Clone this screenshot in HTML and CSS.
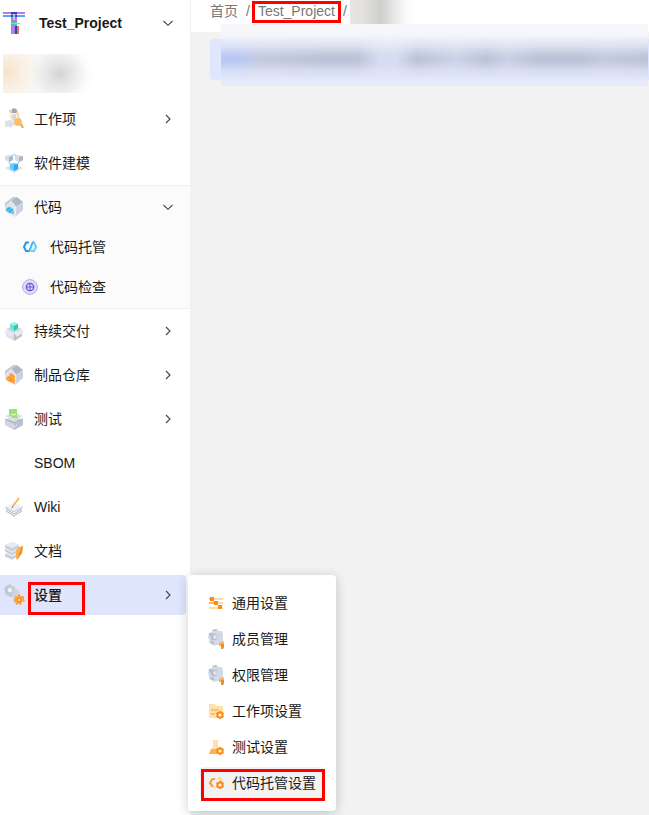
FILE: index.html
```html
<!DOCTYPE html>
<html lang="zh-CN">

<head>
    <meta charset="UTF-8">
    <meta name="viewport" content="width=device-width, initial-scale=1.0">
    <title>Test_Project</title>
    <link rel="stylesheet" href="styles.css">
</head>

<body>
    <svg class="sprite" aria-hidden="true">
        <symbol id="chevron-right" viewBox="0 0 16 16">
            <path d="M6 4l4 4-4 4" fill="none" stroke="#444" stroke-width="1.1" />
        </symbol>
        <symbol id="chevron-down" viewBox="0 0 16 16">
            <path d="M3.500 6L8 10.300 12.500 6" fill="none" stroke="#444" stroke-width="1.1" />
        </symbol>
        <!-- open house, the contents are drawn over it -->
        <symbol id="house" viewBox="0 0 20 20">
            <path d="M1 6l6-3 5 7-1 10-10-6z" fill="#dfe5ed" />
            <path d="M1 6l8-6 4 0-6 4-4 3-2 3z" fill="#c3cad6" />
            <path d="M7 4l6-4 6 5-7 5z" fill="#b0b8c6" />
            <path d="M12 10l7-5v8l-8 7z" fill="#ccd2dc" />
            <path d="M7 4l5 6-1 10" fill="none" stroke="#eceff4" />
        </symbol>
        <!-- grey gear with a pencil, shared by members and permissions -->
        <symbol id="gear-pen" viewBox="0 0 16 20">
            <path d="M4 1l4-1 2 2 4 0 1 4 0 3 0 4-3 3-3 0-3 1-3-2-2-1 0-3-1-3 1-4 3-1z" fill="#d3d9e5" />
            <path d="M5 1l3-1 2 1-4 1zM1 4l3 0-1 3-2-1zM2 13l3-1 1 3-2 0z" fill="#b2bccd" />
            <circle cx="6" cy="8" r="3.300" fill="#b3bdcc" />
            <circle cx="7" cy="8" r="2" fill="#dfe5ee" />
            <path d="M11 14l5-2v4l-1 4-2 0 0-3-2 0z" fill="#ffb354" />
            <path d="M13 15h3v3l-1 2h-2z" fill="#e98c2e" />
        </symbol>
        <symbol id="small-gear" viewBox="0 0 8 8">
            <path d="M3 0h2l.5 1.200L7 1l1 2-.8 1L8 5 7 7l-1.500-.2L5 8H3l-.5-1.200L1 7 0 5l.8-1L0 3l1-2 1.500.2z" fill="#ff8a16" />
            <circle cx="4" cy="4" r="1.600" fill="#fff3e2" />
        </symbol>
    </svg>

    <aside class="sidebar">
        <button class="project" type="button">
            <svg class="logo" viewBox="0 0 22 22" aria-hidden="true">
                <path d="M8 0h6v22H8z" fill="#b17cf8" />
                <path d="M0 0h22v2H0z" fill="#b17cf8" />
                <path d="M0 3h22v2H0z" fill="#62a0f8" />
                <path d="M8 0h6v2H8zM8 3h6v2H8z" fill="#4b39b5" />
                <path d="M10 2h2v6h-2z" fill="#8ee0c0" />
                <path d="M8 9h6v5H8z" fill="#55bfa0" />
                <path d="M8 11h9v1H8z" fill="#f3b55c" />
                <path d="M12 14h2v8h-2z" fill="#394497" />
                <path d="M14 14h2v8h-2z" fill="#f06d66" />
            </svg>
            <span>Test_Project</span>
            <svg class="chevron"><use href="#chevron-down" /></svg>
        </button>

        <div class="mask mask-project"></div>

        <nav>
            <ul class="menu">
                <li>
                    <button class="item" type="button">
                        <svg class="icon" viewBox="0 0 20 20" aria-hidden="true">
                            <path d="M5 1l8-1 4 13-9 3z" fill="#ffc98a" />
                            <path d="M6 4l6-1 4 10-8 3z" fill="#eef0f6" />
                            <path d="M8 0l3-1 2 3-1 2-4 0z" fill="#9da6b5" />
                            <path d="M8 7l4-1M8 9l4-1M9 11l3-1" stroke="#bac3d0" fill="none" />
                            <path d="M1 12l6-1 4 5-3 1-1 2-2-1-4 0z" fill="#dce0e9" />
                            <circle cx="14" cy="13" r="4" fill="#ffbd68" />
                            <path d="M17 15l2 4" stroke="#f2a13f" stroke-width="2" />
                        </svg>
                        <span>工作项</span>
                        <svg class="chevron"><use href="#chevron-right" /></svg>
                    </button>
                </li>
                <li>
                    <a class="item" href="#">
                        <svg class="icon" viewBox="0 0 20 20" aria-hidden="true">
                            <path d="M1 15l9-4 9 4-9 5z" fill="#dce1f0" />
                            <path d="M7 3q3-3 6 0M5 8q0 4 3 4M15 8q0 4-3 4" fill="none" stroke="#83ccef" />
                            <path d="M1 3l4-1 4 1v4L5 9 1 7z" fill="#d8dce5" />
                            <path d="M5 4l4-1v4l-4 2z" fill="#aeb7c6" />
                            <path d="M11 3l4-1 4 1v4l-4 2-4-2z" fill="#d8dce5" />
                            <path d="M15 4l4-1v4l-4 2z" fill="#aeb7c6" />
                            <path d="M6 11l4-1 4 1v5l-4 2-4-2z" fill="#64ccfa" />
                            <path d="M10 12l4-1v5l-4 2z" fill="#2aa9ef" />
                        </svg>
                        <span>软件建模</span>
                    </a>
                </li>
                <li class="group">
                    <button class="item" type="button">
                        <svg class="icon" viewBox="0 0 20 20" aria-hidden="true">
                            <use href="#house" width="20" height="20" />
                            <path d="M2 12q2-4 6-1 2 2 2 6l-5-1-3-2z" fill="#60caf2" />
                            <path d="M3 13l3-2M5 15l4-3" stroke="#258fc9" />
                        </svg>
                        <span>代码</span>
                        <svg class="chevron"><use href="#chevron-down" /></svg>
                    </button>
                    <ul class="submenu">
                        <li>
                            <a class="item" href="#">
                                <svg class="icon-small" viewBox="0 0 16 16" aria-hidden="true">
                                    <path d="M7 3.500H4L2 8l2 4h3" fill="none" stroke="#2499ea" stroke-width="2" />
                                    <path d="M11 3.500h1L14 8l-2 4H9" fill="none" stroke="#66cdf5" stroke-width="2" />
                                    <path d="M11 2.500L7 13" stroke="#39b6ef" stroke-width="2" />
                                </svg>
                                <span>代码托管</span>
                            </a>
                        </li>
                        <li>
                            <a class="item" href="#">
                                <svg class="icon-small" viewBox="0 0 16 16" aria-hidden="true">
                                    <circle cx="8" cy="8" r="7.400" fill="#e3d9fc" stroke="#bca7ef" />
                                    <circle cx="8" cy="8" r="3.700" fill="none" stroke="#6654c5" stroke-width="1.300" />
                                    <path d="M8 4v8M4 8h8" stroke="#6654c5" />
                                </svg>
                                <span>代码检查</span>
                            </a>
                        </li>
                    </ul>
                </li>
                <li>
                    <button class="item" type="button">
                        <svg class="icon" viewBox="0 0 20 20" aria-hidden="true">
                            <path d="M2 9l8-3 8 3v6l-8 5-8-5z" fill="#dce0e9" />
                            <path d="M10 13l8-4v6l-8 5z" fill="#b7c0cf" />
                            <path d="M2 8l8 4 8-4-8-3z" fill="#cfd5df" />
                            <path d="M0 11l3-3 7 4-3 4zM20 11l-3-3-7 4 3 4z" fill="#e6e9f0" />
                            <path d="M6 3l4-2 4 2v4l-4 3-4-3z" fill="#66e3cc" />
                            <path d="M6 3l4-2 4 2-4 2z" fill="#a4f2df" />
                            <path d="M10 5l4-2v4l-4 3z" fill="#2fc6b3" />
                        </svg>
                        <span>持续交付</span>
                        <svg class="chevron"><use href="#chevron-right" /></svg>
                    </button>
                </li>
                <li>
                    <button class="item" type="button">
                        <svg class="icon" viewBox="0 0 20 20" aria-hidden="true">
                            <use href="#house" width="20" height="20" />
                            <path d="M5 9l3-1 3 3v8l-3-1-6-3v-3l3-1z" fill="#ffac48" />
                            <path d="M4 12l3 1v4M7 10l3 2M4 16l3-2 3 2" fill="none" stroke="#f0852e" />
                        </svg>
                        <span>制品仓库</span>
                        <svg class="chevron"><use href="#chevron-right" /></svg>
                    </button>
                </li>
                <li>
                    <button class="item" type="button">
                        <svg class="icon" viewBox="0 0 20 20" aria-hidden="true">
                            <path d="M1 11l9-4 9 4v5l-9 5-9-5z" fill="#d0d5df" />
                            <path d="M10 15l9-4v5l-9 5z" fill="#b9c2d0" />
                            <path d="M1 7l9-4 9 4-9 5z" fill="#dce1e9" />
                            <path d="M1 10l9 4 9-4" fill="none" stroke="#9da8b8" />
                            <path d="M5 0h8v7l1 2-5 0-4-3z" fill="#98e66e" />
                            <path d="M7 5l2 1 3-1" fill="none" stroke="#e9ffdc" />
                            <path d="M8 17l2 1 3-2" stroke="#e4e9ef" fill="none" />
                        </svg>
                        <span>测试</span>
                        <svg class="chevron"><use href="#chevron-right" /></svg>
                    </button>
                </li>
                <li><a class="item item-plain" href="#"><span>SBOM</span></a></li>
                <li>
                    <a class="item" href="#">
                        <svg class="icon" viewBox="0 0 20 20" aria-hidden="true">
                            <path d="M2 14l8 5 8-5M2 12l8 5 8-5" fill="none" stroke="#a7b0be" />
                            <path d="M1 10l9-4 9 4-9 5z" fill="#eef0f5" />
                            <path d="M1 10l9 5 9-5" fill="none" stroke="#c0c7d2" />
                            <path d="M15 1L9 9" stroke="#ffb354" stroke-width="1.800" />
                            <path d="M9 9l-1 2" stroke="#6f7886" />
                        </svg>
                        <span>Wiki</span>
                    </a>
                </li>
                <li>
                    <a class="item" href="#">
                        <svg class="icon" viewBox="0 0 20 20" aria-hidden="true">
                            <path d="M1 13l7-3 7 3v2l-7 4-7-3z" fill="#dde1e9" />
                            <path d="M1 14l7 3 7-3" fill="none" stroke="#b4bdcb" />
                            <path d="M1 8l7-3 7 3v3l-7 4-7-4z" fill="#e2e6ed" />
                            <path d="M1 9l7 4 7-4" fill="none" stroke="#b4bdcb" />
                            <path d="M1 4l8-3 6 3v3l-7 3-7-3z" fill="#c9d0dc" />
                            <path d="M1 4l8-3 6 3-7 3z" fill="#e9edf3" />
                            <path d="M12 9l3-3 4-1-1 7-5 7-1-2z" fill="#ffb250" />
                            <path d="M17 6l2-1-1 7-5 7z" fill="#ed913b" />
                        </svg>
                        <span>文档</span>
                    </a>
                </li>
                <li class="has-popup">
                    <button class="item active" type="button" aria-expanded="true">
                        <svg class="icon" viewBox="0 0 20 20" aria-hidden="true">
                            <path d="M2 1l4-2 2 2 3 1 0 3 1 3-2 3-3 1-3-1-3-2 0-3-1-2z" fill="#c3c9d4" />
                            <circle cx="6" cy="5" r="2.300" fill="#eef1f6" />
                            <path d="M9 5l3-1 3 2 1 4-3 3-3 1-2-3z" fill="#d0d5dd" />
                            <path d="M14 10l2-1 1 2 3 0 0 3 1 2-3 1-1 3-3-1-2 1-1-3-2-2 2-2 0-2 3 0z" fill="#ffa63c" />
                            <circle cx="15" cy="15" r="1.800" fill="#ffe1b5" stroke="#e98122" />
                        </svg>
                        <span>设置</span>
                        <svg class="chevron"><use href="#chevron-right" /></svg>
                    </button>
                    <i class="marker marker-settings"></i>

                    <ul class="popup">
                        <li>
                            <a href="#">
                                <svg viewBox="0 0 16 16" aria-hidden="true">
                                    <path d="M1 4h14M1 8h14M1 13h14" stroke="#ffdba8" stroke-width="2" />
                                    <path d="M1 8h6M1 4h3" stroke="#ffa744" stroke-width="1.500" />
                                    <path d="M2 2h4v4H2zM6 6h4v4H6zM10 10h4v4h-4z" fill="#ff8a16" />
                                </svg>
                                <span>通用设置</span>
                            </a>
                        </li>
                        <li>
                            <a href="#"><svg class="tall"><use href="#gear-pen" /></svg><span>成员管理</span></a>
                        </li>
                        <li>
                            <a href="#"><svg class="tall"><use href="#gear-pen" /></svg><span>权限管理</span></a>
                        </li>
                        <li>
                            <a href="#">
                                <svg viewBox="0 0 16 16" aria-hidden="true">
                                    <path d="M1 1h6l1 2h7v12H1z" fill="#ffdfac" />
                                    <path d="M3 7h8M3 11h4" stroke="#ffb65d" stroke-width="1.500" />
                                    <use href="#small-gear" x="8" y="8" width="8" height="8" />
                                </svg>
                                <span>工作项设置</span>
                            </a>
                        </li>
                        <li>
                            <a href="#">
                                <svg viewBox="0 0 16 16" aria-hidden="true">
                                    <path d="M4 1h7v1h-1v5l5 8H1l4-8V2H4z" fill="#ffe0b2" />
                                    <path d="M3 10h6v5H1z" fill="#ffb04f" />
                                    <use href="#small-gear" x="8" y="8" width="8" height="8" />
                                </svg>
                                <span>测试设置</span>
                            </a>
                        </li>
                        <li>
                            <a class="current" href="#">
                                <svg viewBox="0 0 16 16" aria-hidden="true">
                                    <path d="M7 4H4.500L2 8l3 4" fill="none" stroke="#ff9c35" stroke-width="2.200" />
                                    <path d="M10 3h2l2 5" fill="none" stroke="#ffd395" stroke-width="2.200" />
                                    <use href="#small-gear" x="8" y="6" width="8" height="8" />
                                </svg>
                                <span>代码托管设置</span>
                            </a>
                            <i class="marker marker-current"></i>
                        </li>
                    </ul>
                </li>
            </ul>
        </nav>
    </aside>

    <main>
        <header class="topbar">
            <nav class="breadcrumb">
                <a href="#">首页</a>
                <span>/</span>
                <a class="crumb-project" href="#">Test_Project<i class="marker marker-crumb"></i></a>
                <span>/</span>
            </nav>
            <div class="mask mask-crumb"></div>
        </header>
        <div class="notice">
            <div class="mask mask-notice"></div>
        </div>
    </main>
</body>

</html>
```
FILE: styles.css
```css
* {
    box-sizing: border-box;
}

body {
    margin: 0;
    min-height: 100vh;
    display: flex;
    background: #f2f2f2;
    color: #191919;
    font-family: "Liberation Sans", "Noto Sans CJK SC", sans-serif;
    font-size: 14px;
    line-height: 20px;
    overflow-x: hidden;
}

a {
    color: inherit;
    text-decoration: none;
}

button {
    border: 0;
    background: none;
    color: inherit;
    font: inherit;
    text-align: left;
    cursor: pointer;
}

ul {
    list-style: none;
    margin: 0;
    padding: 0;
}

svg {
    flex: none;
    overflow: visible;
}

.sprite {
    position: absolute;
    width: 0;
    height: 0;
}

/* sidebar */
.sidebar {
    flex: none;
    width: 190px;
    background: #fff;
}

.project {
    display: flex;
    align-items: center;
    width: 100%;
    height: 46px;
    padding: 0 14px 0 3px;
    gap: 14px;
    font-weight: bold;
}

.logo {
    width: 22px;
    height: 22px;
}

.chevron {
    width: 16px;
    height: 16px;
    margin-left: auto;
}

.menu {
    padding-top: 4px;
}

.menu > li {
    padding: 2px 0;
}

.item {
    display: flex;
    align-items: center;
    width: 100%;
    height: 40px;
    padding: 0 14px 0 4px;
    gap: 10px;
}

.item-plain {
    padding-left: 34px;
}

.icon {
    width: 20px;
    height: 20px;
}

.icon-small {
    width: 16px;
    height: 16px;
}

.group {
    background: #fbfbfb;
    box-shadow: inset 0 1px #f0f0f0, inset 0 -1px #f0f0f0;
}

.submenu .item {
    padding-left: 22px;
    gap: 12px;
}

.has-popup {
    position: relative;
}

.active {
    width: 186px;
    padding-right: 10px;
    border-radius: 0 4px 4px 0;
    background: #dfe5fd;
    font-weight: 500;
}

.popup {
    position: absolute;
    z-index: 2;
    top: 2px;
    left: 188px;
    width: 148px;
    padding: 10px 12px;
    border-radius: 4px;
    background: #fff;
    box-shadow: 0 2px 12px rgba(0, 0, 0, 0.2);
}

.popup li {
    position: relative;
    padding: 2px 0;
}

.popup a {
    display: flex;
    align-items: center;
    height: 32px;
    padding: 0 8px;
    gap: 8px;
    border-radius: 4px;
    white-space: nowrap;
}

.popup svg {
    width: 16px;
    height: 16px;
}

.popup .tall {
    height: 20px;
}

.popup .current {
    background: #f2f2f2;
}

/* red callout frames */
.marker {
    position: absolute;
    border: 3px solid #f00;
    pointer-events: none;
}

.marker-settings {
    top: 9px;
    left: 28px;
    width: 57px;
    height: 33px;
}

.marker-current {
    top: 4px;
    left: 1px;
    width: 124px;
    height: 32px;
}

.marker-crumb {
    inset: 1px -6px -1px;
}

/* main area */
main {
    flex: 1;
    min-width: 0;
}

.topbar {
    display: flex;
    align-items: flex-start;
    height: 32px;
    padding-left: 19px;
    border-left: 1px solid #f2f2f2;
    background: #fff;
}

.breadcrumb {
    display: flex;
    gap: 8px;
    color: #777;
    line-height: 22px;
}

.crumb-project {
    position: relative;
}

.notice {
    position: relative;
    height: 41px;
    margin: 7px 0 0 20px;
    border-radius: 4px 0 0 4px;
    background: #dfe6fe;
}

/* blurred private content */
.mask-project {
    width: 90px;
    height: 39px;
    margin: 8px 0 0 3px;
    background:
        radial-gradient(ellipse 34px 32px at 57px 20px, #d4d4d4, rgba(220, 220, 220, 0.6) 40%, rgba(240, 240, 240, 0.2) 80%, transparent),
        radial-gradient(ellipse 34px 36px at 4px 18px, #f6e2ca, rgba(250, 235, 216, 0.5) 50%, transparent),
        linear-gradient(90deg, #fbf7f2, #f8f8f8 50%, #fff);
}

.mask-crumb {
    width: 68px;
    height: 24px;
    margin-left: 3px;
    background: linear-gradient(90deg, #e8e6e5, #e1e0df 20%, #cecfcd 45%, #e6e6e6 65%, #fafafa 82%, #fff);
}

.mask-notice {
    position: absolute;
    top: -15px;
    right: 1px;
    left: 11px;
    height: 62px;
    background: linear-gradient(#f6f7fb 15%, #e8ecf8 38%, #d9def2 55%, #e1e7f8 80%, #e7ebf8);
}

.mask-notice::before {
    content: "";
    display: block;
    height: 100%;
    background: linear-gradient(90deg, #b9c7f5 4%, #c5cbdf 9%, #bdc3d7 24%, #bdc3d7 32%, #d6dcf1 37%, #d6dcf1 41%, #bdc3d7 46%, #cdd4e9 55%, #bdc3d7 62%, #cad0e5 67%, #bdc3d7 74%, #bdc3d7 84%, #c5cbdf 90%, #bdc3d7);
    -webkit-mask-image: linear-gradient(transparent 20%, rgba(0, 0, 0, 0.3) 36%, #000 54%, #000 60%, rgba(0, 0, 0, 0.3) 74%, transparent 90%);
    mask-image: linear-gradient(transparent 20%, rgba(0, 0, 0, 0.3) 36%, #000 54%, #000 60%, rgba(0, 0, 0, 0.3) 74%, transparent 90%);
}
```
